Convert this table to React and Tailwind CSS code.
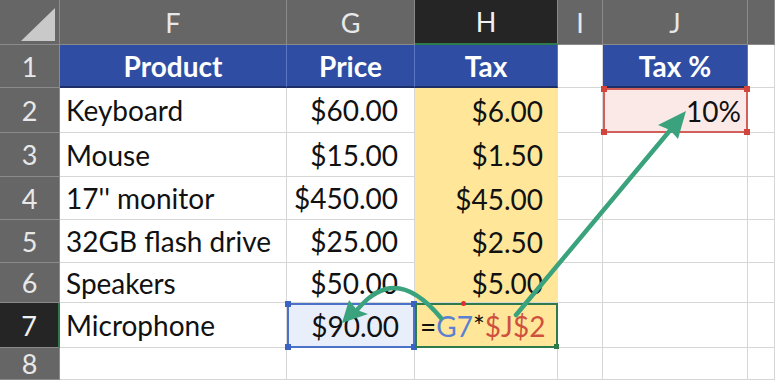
import React from 'react'

const rows = [
    { n: 2, f: 'Keyboard', g: '$60.00', h: '$6.00' },
    { n: 3, f: 'Mouse', g: '$15.00', h: '$1.50' },
    { n: 4, f: "17'' monitor", g: '$450.00', h: '$45.00' },
    { n: 5, f: '32GB flash drive', g: '$25.00', h: '$2.50' },
    { n: 6, f: 'Speakers', g: '$50.00', h: '$5.00' },
]

const hdr = "flex items-center justify-center bg-[#666666] text-[#e8e8e8] text-[27px] border-r border-b border-[#8a8a8a]"
const cell = "flex items-center border-r border-b border-[#d6d6d6] bg-white text-[#111]"
const blue = "flex items-center justify-center bg-[#2f4ea3] text-white font-bold border-r border-[#5a75c2] border-b-2 border-b-[#1d2f66]"

const Handle = ({ pos, color }) => (
    <span className={`absolute w-[6px] h-[6px] ${color} ${pos}`} />
)

export default function App() {
    return (
        <div className="relative w-[775px] h-[380px] overflow-hidden bg-white font-['Lato','Liberation_Sans',sans-serif] text-[28px] leading-none">
            <div className="grid h-full grid-cols-[60px_227px_128px_143px_45px_145px_1fr] grid-rows-[45px_43px_45px_44px_43px_43px_40px_45px_1fr]">
                {/* column headers */}
                <div className={`${hdr} relative`}>
                    <svg className="absolute left-[21px] top-[8px]" width="34" height="33" viewBox="0 0 34 33">
                        <polygon points="34,0 34,33 0,33" fill="#c9c9c9" />
                    </svg>
                </div>
                <div className={hdr}>F</div>
                <div className={hdr}>G</div>
                <div className="flex items-center justify-center bg-[#252525] text-[#f0f0f0] text-[27px] border-r border-[#8a8a8a] border-b-2 border-b-[#2f7a4a]">H</div>
                <div className={hdr}>I</div>
                <div className={hdr}>J</div>
                <div className={hdr}></div>

                {/* row 1 */}
                <div className={hdr}>1</div>
                <div className={blue}>Product</div>
                <div className={blue}>Price</div>
                <div className={blue}>Tax</div>
                <div className={cell}></div>
                <div className={blue}>Tax %</div>
                <div className={cell}></div>

                {rows.map((r, i) => (
                    <React.Fragment key={r.n}>
                        <div className={hdr}>{r.n}</div>
                        <div className={`${cell} pl-[6px]`}>{r.f}</div>
                        <div className={`${cell} justify-end pr-[16px]`}>{r.g}</div>
                        <div className={`flex items-center justify-end pr-[15px] bg-[#ffe699] text-[#111] ${i === 4 ? 'border-b border-[#d6d6d6]' : ''}`}>{r.h}</div>
                        <div className={cell}></div>
                        {i === 0 ? (
                            <div className="relative flex items-center justify-end pr-[5px] bg-[#fbe9e7] text-[#111] border-2 border-[#d2605a]">
                                10%
                                <Handle color="bg-[#d2453d]" pos="-left-[4px] -top-[4px]" />
                                <Handle color="bg-[#d2453d]" pos="-right-[4px] -top-[4px]" />
                                <Handle color="bg-[#d2453d]" pos="-left-[4px] -bottom-[4px]" />
                                <Handle color="bg-[#d2453d]" pos="-right-[4px] -bottom-[4px]" />
                            </div>
                        ) : (
                            <div className={cell}></div>
                        )}
                        <div className={cell}></div>
                    </React.Fragment>
                ))}

                {/* row 7 */}
                <div className="flex items-center justify-center bg-[#252525] text-[#f0f0f0] text-[27px] border-b border-[#8a8a8a] border-r-2 border-r-[#2f7a4a]">7</div>
                <div className={`${cell} pl-[6px]`}>Microphone</div>
                <div className="relative flex items-center justify-end pr-[14px] bg-[#e8eefa] text-[#111] border-2 border-[#4a72c9]">
                    $90.00
                    <Handle color="bg-[#3b63c4]" pos="-left-[4px] -top-[4px]" />
                    <Handle color="bg-[#3b63c4]" pos="-right-[4px] -top-[4px]" />
                    <Handle color="bg-[#3b63c4]" pos="-left-[4px] -bottom-[4px]" />
                    <Handle color="bg-[#3b63c4]" pos="-right-[4px] -bottom-[4px]" />
                </div>
                <div className="relative flex items-center pl-[3px] bg-[#ffe699] text-[#111] border-2 border-[#2f7a4a]">
                    <span>=</span>
                    <span className="text-[#5b80d2]">G7</span>
                    <span>*</span>
                    <span className="text-[#d0503f]">$J$2</span>
                    <span className="absolute left-[44px] -top-[4px] w-[5px] h-[5px] rounded-full bg-[#e0302a]" />
                    <span className="absolute -right-[3px] -bottom-[3px] w-[5px] h-[5px] bg-[#2f7a4a]" />
                </div>
                <div className={cell}></div>
                <div className={cell}></div>
                <div className={cell}></div>

                {/* row 8 */}
                <div className={hdr}>8</div>
                <div className={cell}></div>
                <div className={cell}></div>
                <div className={cell}></div>
                <div className={cell}></div>
                <div className={cell}></div>
                <div className={cell}></div>
            </div>

            {/* reference arrows */}
            <svg className="absolute inset-0 pointer-events-none" width="775" height="380" viewBox="0 0 775 380">
                <line x1="516" y1="315" x2="672" y2="128" stroke="#3aa37d" strokeWidth="4.5" strokeLinecap="round" />
                <polygon points="686,111 678,139 670,130 658,125" fill="#3aa37d" />
                <path d="M 441 318 C 426 300, 406 284, 386 289 C 372 293, 364 302, 356 311" fill="none" stroke="#3aa37d" strokeWidth="4.5" strokeLinecap="round" />
                <polygon points="342,323 349,300 357,310 368,314" fill="#3aa37d" />
            </svg>
        </div>
    )
}
